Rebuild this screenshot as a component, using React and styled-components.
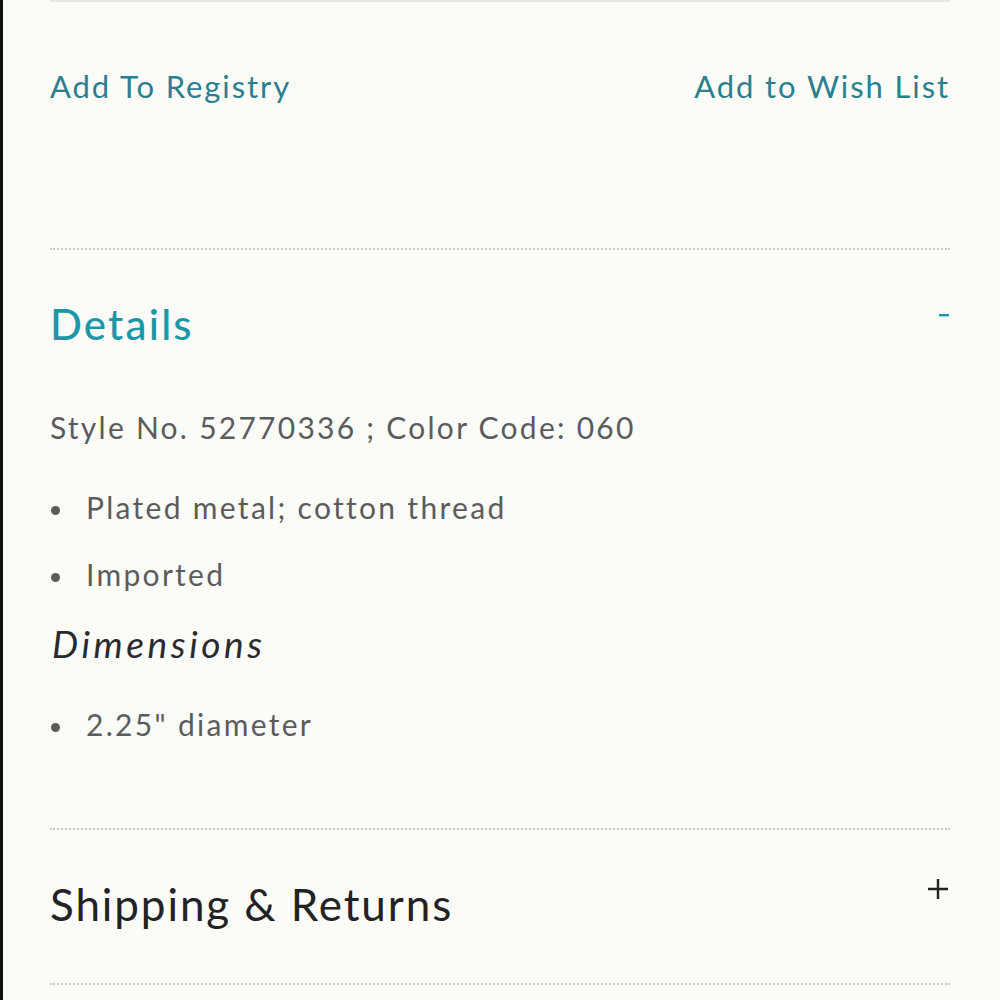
import React from "react";
import styled, { createGlobalStyle } from "styled-components";

const GlobalStyle = createGlobalStyle`
	html, body {
		margin: 0;
		padding: 0;
		background: #fbfbf8;
	}
	body {
		font-family: Lato, "Noto Sans", sans-serif;
	}
`;

const Page = styled.div`
	min-height: 1000px;
	box-sizing: border-box;
	border-left: 3px solid #111;
	padding: 0 50px 0 47px;
	background: #fbfbf8;
`;

const TopRule = styled.div`
	height: 2px;
	background: #e6e6e3;
`;

const ActionRow = styled.div`
	display: flex;
	justify-content: space-between;
	align-items: flex-start;
	height: 246px;
	padding-top: 62px;
	box-sizing: border-box;
`;

const ActionLink = styled.a`
	font-size: 31px;
	line-height: 44px;
	color: #2a7f8e;
	letter-spacing: 1.9px;
	text-decoration: none;
	cursor: pointer;
`;

const Divider = styled.hr`
	margin: 0;
	border: none;
	border-top: 2px dotted #c6c6c4;
	height: 0;
`;

const SectionHeader = styled.div`
	display: flex;
	justify-content: space-between;
	align-items: flex-start;
	padding-top: ${p => p.$top}px;
	padding-bottom: ${p => p.$bottom}px;
`;

const SectionTitle = styled.h2`
	margin: 0;
	font-size: ${p => p.$size}px;
	line-height: ${p => p.$size + 8}px;
	font-weight: ${p => (p.$open ? 500 : 400)};
	color: ${p => (p.$open ? "#1b98a8" : "#232325")};
	letter-spacing: ${p => p.$spacing}px;
`;

const Toggle = styled.span`
	display: block;
	margin-top: ${p => p.$offset}px;
	line-height: 0;
`;

const Body = styled.div`
	padding-bottom: 84px;
	color: #5b5b5e;
`;

const StyleLine = styled.p`
	margin: 0;
	font-size: 30px;
	line-height: 40px;
	letter-spacing: 2.25px;
`;

const List = styled.ul`
	list-style: none;
	margin: ${p => p.$top}px 0 0 0;
	padding: 0;
	display: flex;
	flex-direction: column;
	gap: 27px;
`;

const Item = styled.li`
	position: relative;
	padding-left: 36px;
	font-size: 30px;
	line-height: 40px;
	letter-spacing: 2.3px;

	&:before {
		content: "";
		position: absolute;
		left: 1px;
		top: 19px;
		width: 9px;
		height: 9px;
		border-radius: 50%;
		background: #5b5b5e;
	}
`;

const SubHeading = styled.h3`
	margin: 28px 0 0 2px;
	font-size: 37px;
	line-height: 44px;
	font-style: italic;
	font-weight: 400;
	color: #2a2a2c;
	letter-spacing: 3.6px;
`;

const Minus = () => (
	<svg width="12" height="4" viewBox="0 0 12 4">
		<rect x="1" y="1" width="10" height="2.4" fill="#1b98a8" />
	</svg>
);

const Plus = () => (
	<svg width="24" height="24" viewBox="0 0 24 24">
		<path d="M2 12h20M12 2v20" stroke="#232325" strokeWidth="2.4" />
	</svg>
);

export default () => {
	return (
		<>
			<GlobalStyle />
			<Page>
				<TopRule />
				<ActionRow>
					<ActionLink>Add To Registry</ActionLink>
					<ActionLink>Add to Wish List</ActionLink>
				</ActionRow>
				<Divider />
				<SectionHeader $top={49} $bottom={58}>
					<SectionTitle $size={42} $spacing={2.2} $open>
						Details
					</SectionTitle>
					<Toggle $offset={12}>
						<Minus />
					</Toggle>
				</SectionHeader>
				<Body>
					<StyleLine>Style No. 52770336 ; Color Code: 060</StyleLine>
					<List $top={40}>
						<Item>Plated metal; cotton thread</Item>
						<Item>Imported</Item>
					</List>
					<SubHeading>Dimensions</SubHeading>
					<List $top={38}>
						<Item>2.25" diameter</Item>
					</List>
				</Body>
				<Divider />
				<SectionHeader $top={48} $bottom={53}>
					<SectionTitle $size={44} $spacing={1.9}>
						Shipping &amp; Returns
					</SectionTitle>
					<Toggle $offset={-1}>
						<Plus />
					</Toggle>
				</SectionHeader>
				<Divider />
			</Page>
		</>
	);
};
